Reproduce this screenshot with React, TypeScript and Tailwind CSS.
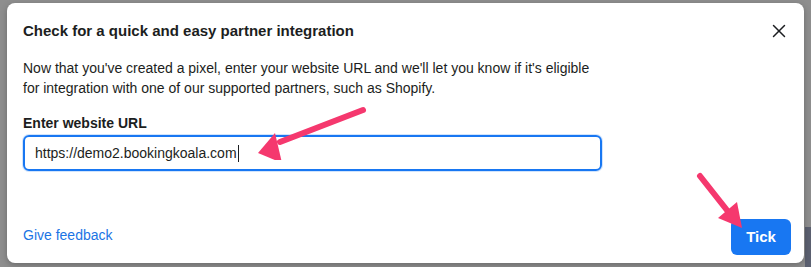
import { X } from 'lucide-react';

const FONT = { fontFamily: '"Liberation Sans", Helvetica, Arial, sans-serif' };

export default function App() {
  return (
    <div className="relative h-[267px] w-[811px] overflow-hidden bg-[#8e8e8e] pl-[7px] pt-[3px]" style={FONT}>
      <div className="absolute bottom-0 right-0 h-[40px] w-[6px] bg-[#5b6070]" />
      <div className="relative flex h-[260px] w-[797px] flex-col rounded-lg bg-white shadow-[0_2px_6px_rgba(0,0,0,0.25)]">
        <div className="flex items-center justify-between pl-4 pr-[14px] pt-[17px]">
          <h1 className="text-[15px] font-bold leading-5 text-[#1c1e21]">Check for a quick and easy partner integration</h1>
          <X className="h-[22px] w-[22px] text-[#1c1e21]" strokeWidth={1.6} />
        </div>
        <p className="mt-[16px] w-[596px] pl-4 text-[14px] leading-5 text-[#1c1e21]">
          Now that you've created a pixel, enter your website URL and we'll let you know if it's eligible for integration
          with one of our supported partners, such as Shopify.
        </p>
        <label className="mt-[15px] pl-4 text-[14px] font-bold leading-5 text-[#1c1e21]">Enter website URL</label>
        <div className="ml-4 mt-[2px] flex h-[36px] w-[579px] items-center rounded-md border-2 border-[#1877f2] px-[10px] text-[14px] text-[#1c1e21] shadow-[0_0_0_1px_rgba(24,119,242,0.2)]">
          https://demo2.bookingkoala.com
          <span className="ml-px h-[17px] w-px bg-[#1c1e21]" />
        </div>
        <div className="mt-auto flex items-end justify-between pb-2 pl-4 pr-[13px]">
          <span className="mb-[9px] text-[14px] text-[#1b74e4]">Give feedback</span>
          <button className="h-9 w-[60px] rounded-md bg-[#1877f2] text-[15px] font-bold text-white">Tick</button>
        </div>
      </div>

      {/* flèches d'annotation */}
      <svg className="absolute left-[250px] top-[100px] h-[60px] w-[120px]" viewBox="0 0 120 60" fill="none">
        <path d="M113 10 L30 42" stroke="#f5386e" strokeWidth="6" strokeLinecap="round" />
        <polygon points="8,53 25,33 32,63" fill="#f5386e" />
      </svg>
      <svg className="absolute left-[690px] top-[168px] h-[70px] w-[60px]" viewBox="0 0 60 70" fill="none">
        <path d="M10 8 L40 46" stroke="#f5386e" strokeWidth="6" strokeLinecap="round" />
        <polygon points="52,60 28,50 47,34" fill="#f5386e" />
      </svg>
    </div>
  );
}
